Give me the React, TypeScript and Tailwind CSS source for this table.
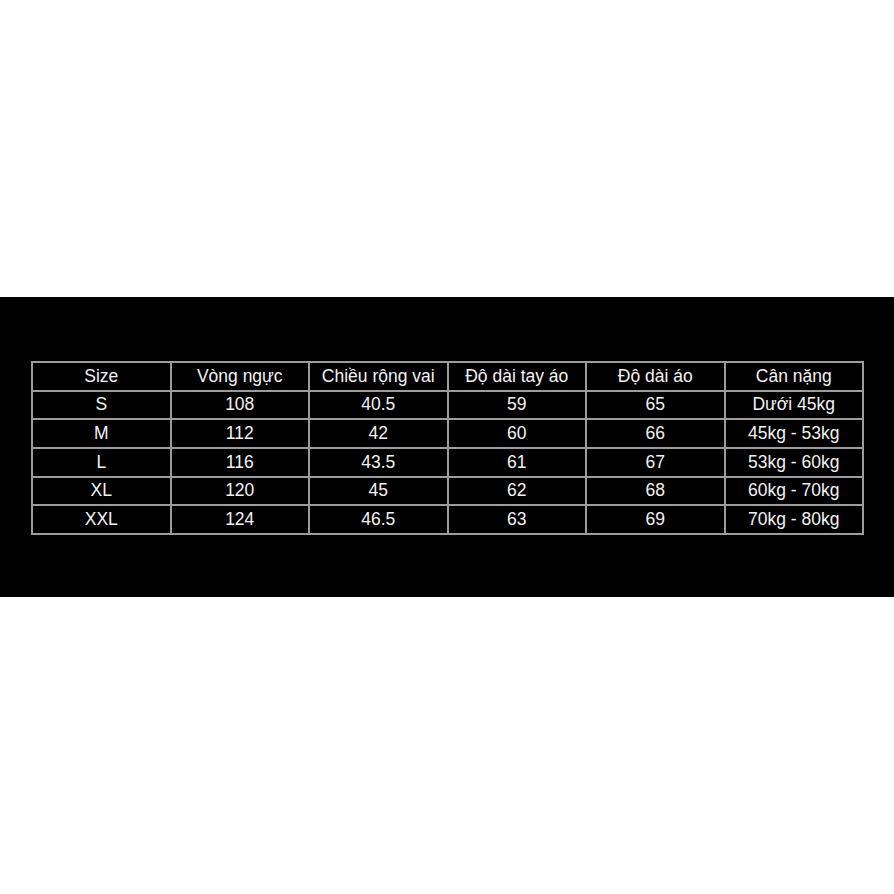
const header = ['Size', 'Vòng ngực', 'Chiều rộng vai', 'Độ dài tay áo', 'Độ dài áo', 'Cân nặng']
const rows = [
  ['S', '108', '40.5', '59', '65', 'Dưới 45kg'],
  ['M', '112', '42', '60', '66', '45kg - 53kg'],
  ['L', '116', '43.5', '61', '67', '53kg - 60kg'],
  ['XL', '120', '45', '62', '68', '60kg - 70kg'],
  ['XXL', '124', '46.5', '63', '69', '70kg - 80kg'],
]

export default function App() {
  return (
    <div className="h-[894px] w-[894px] bg-white" style={{ fontFamily: '"Liberation Sans", Arial, sans-serif' }}>
      <div className="h-[297px]" />
      <div className="h-[300px] bg-black pl-[31px] pt-[64px]">
        <div className="grid w-[833px] grid-cols-[repeat(6,138.5px)] border-l-2 border-t-2 border-[#9c9c9c]">
          {[header, ...rows].map((r, i) =>
            r.map((c, j) => (
              <div key={i + '-' + j}
                className="flex h-[28.67px] items-center justify-center border-b-2 border-r-2 border-[#9c9c9c] text-[17.5px] leading-none text-[#f2f2f2]">
                {c}
              </div>
            ))
          )}
        </div>
      </div>
    </div>
  )
}
